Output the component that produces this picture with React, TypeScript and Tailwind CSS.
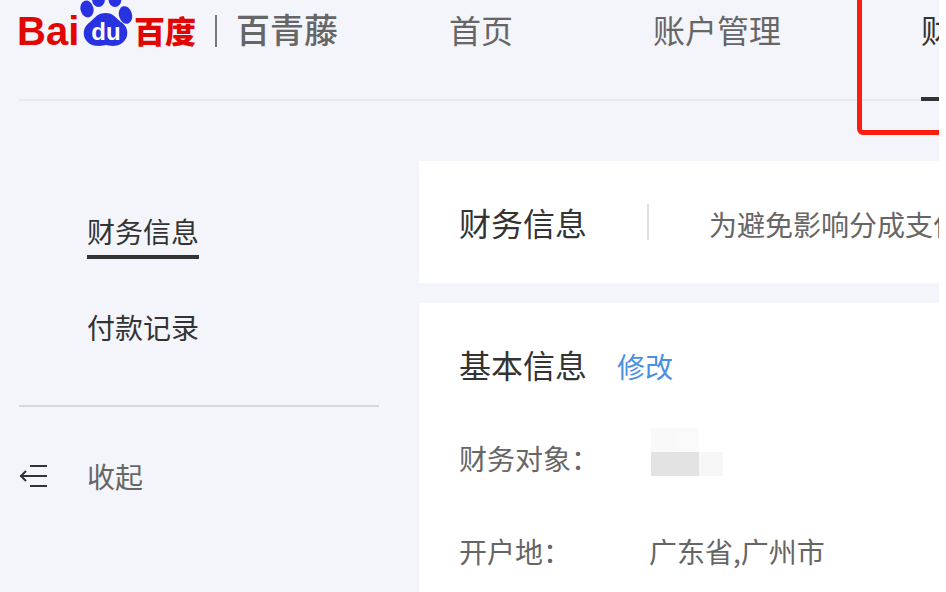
import React from 'react';

const PawLogo = () => (
  <svg className="w-[54px] h-[46px] shrink-0" viewBox="0 0 54 46">
    <g fill="#2932e1">
      <ellipse cx="8" cy="9" rx="6.5" ry="8.5" transform="rotate(-14 8 9)" />
      <ellipse cx="19.5" cy="-1" rx="6.5" ry="8" />
      <ellipse cx="36" cy="-1" rx="6.5" ry="8" />
      <ellipse cx="46.5" cy="15" rx="6.5" ry="9" transform="rotate(-16 46.5 15)" />
      <path d="M27 13c7 0 10 5 15 9 6 4 7 9 6 14-2 7-9 10-14 10-3 0-5-1-7-1s-4 1-7 1c-7 0-13-3-15-10-1-6 1-10 6-14s7-9 16-9z" />
    </g>
  </svg>
);

const Logo = () => (
  <div className="flex items-center shrink-0 whitespace-nowrap h-[62px] ml-[19px] font-['Liberation_Sans','Noto_Sans_CJK_SC',sans-serif]">
    <span className="-ml-[2px] text-[#e10601] text-[40px] font-bold leading-none w-[62px]">Bai</span>
    <div className="relative -mt-[16px] shrink-0">
      <PawLogo />
      <span className="absolute left-[12px] top-[20px] text-white text-[24px] font-bold leading-[24px] w-[30px] text-center">du</span>
    </div>
    <span className="ml-[1px] mb-[4px] text-[#e10601] text-[31px] font-black leading-none font-['Noto_Sans_CJK_SC',sans-serif]">百度</span>
    <div className="w-[2px] h-[32px] bg-[#777777] ml-[19px] shrink-0" />
    <span className="ml-[19px] mb-[4px] text-[#666666] text-[34px] font-medium leading-none font-['Noto_Sans_CJK_SC',sans-serif]">百青藤</span>
  </div>
);

const Header = () => (
  <div className="relative h-[101px] ml-[19px] border-b-2 border-[#e9e9ed] shrink-0">
    <div className="flex -ml-[19px]">
      <Logo />
      <nav className="flex shrink-0 whitespace-nowrap ml-[111px] h-[58px] items-center text-[32px] leading-none text-[#666666]">
        <span>首页</span>
        <span className="ml-[140px]">账户管理</span>
        <span className="ml-[140px] text-[#333333]">财务管理</span>
      </nav>
    </div>
    <div className="absolute left-[902px] top-[97px] w-[18px] h-[4px] bg-[#333333]" />
  </div>
);

const Sidebar = () => (
  <aside className="w-[419px] shrink-0 pl-[19px] text-[28px] leading-none">
    <div className="pl-[68px] pt-[117px]">
      <div className="inline-block text-[#333333] pb-[10px] border-b-4 border-[#333333]">财务信息</div>
      <div className="text-[#333333] mt-[54px]">付款记录</div>
    </div>
    <div className="w-[360px] h-[2px] bg-[#d9d9d9] mt-[64px]" />
    <div className="flex items-center mt-[55px] text-[#666666]">
      <svg className="w-[28px] h-[24px]" viewBox="0 0 28 24" fill="none" stroke="#333333" strokeWidth="2">
        <path d="M11 2h17M1 12h27M11 22h17" />
        <path d="M7 7l-5 5 5 5" />
      </svg>
      <span className="ml-[40px]">收起</span>
    </div>
  </aside>
);

// blurred-out account name
const Mosaic = () => (
  <div className="grid grid-cols-[24px_24px_24px] grid-rows-[24px_24px] h-[48px] -mt-[16px] -mb-[4px]">
    <div className="bg-[#f9f9f9]" />
    <div className="bg-[#fafafa]" />
    <div />
    <div className="col-span-2 bg-[#e3e3e3]" />
    <div className="bg-[#f7f7f7]" />
  </div>
);

const Content = () => (
  <main className="flex-1 min-w-0 flex flex-col gap-[20px] pt-[61px]">
    <section className="h-[122px] shrink-0 bg-white flex items-center pl-[40px] overflow-hidden whitespace-nowrap">
      <h2 className="text-[32px] leading-none text-[#333333] shrink-0">财务信息</h2>
      <div className="w-[2px] h-[36px] bg-[#e0e0e0] ml-[60px] shrink-0" />
      <p className="ml-[60px] mt-[3px] text-[28px] leading-none text-[#666666] shrink-0">为避免影响分成支付，请及时完善财务信息</p>
    </section>
    <section className="flex-1 bg-white pl-[40px] pt-[45px]">
      <div className="flex items-start">
        <h2 className="text-[32px] leading-none text-[#333333]">基本信息</h2>
        <a className="ml-[30px] mt-[4px] text-[28px] leading-none text-[#4a90e2]">修改</a>
      </div>
      <div className="flex items-center mt-[64px] text-[28px] leading-none text-[#666666]">
        <span className="w-[192px] shrink-0">财务对象：</span>
        <Mosaic />
      </div>
      <div className="flex items-center mt-[65px] text-[28px] leading-none text-[#666666]">
        <span className="w-[190px] shrink-0">开户地：</span>
        <span>广东省,广州市</span>
      </div>
    </section>
  </main>
);

export default function App() {
  return (
    <div className="w-[946px] h-[592px] bg-white overflow-hidden font-['Noto_Sans_CJK_SC',sans-serif]">
      <div className="relative w-[939px] h-[592px] bg-[#f4f5fa] flex flex-col overflow-hidden">
        <Header />
        <div className="flex flex-1 min-h-0 -mt-[1px]">
          <Sidebar />
          <Content />
        </div>
        {/* red annotation box */}
        <div className="absolute left-[857px] -top-[10px] w-[120px] h-[145px] border-[5px] border-[#fb1e10] rounded-[6px]" />
      </div>
    </div>
  );
}
